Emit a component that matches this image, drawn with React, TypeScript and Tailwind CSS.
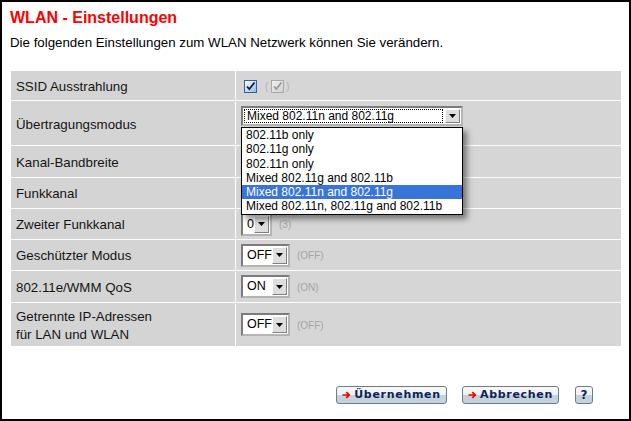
import React from "react";

const Arrow = () => (
  <svg width="9" height="8" viewBox="0 0 9 8" className="shrink-0">
    <path d="M0.5 4H7.2M4.3 1.2L7.2 4L4.3 6.8" stroke="#f00000" strokeWidth="1.7" fill="none" />
  </svg>
);

const Check = ({ gray }: { gray?: boolean }) => (
  <svg width="13" height="13" viewBox="0 0 13 13">
    <defs>
      <linearGradient id={gray ? "cbg" : "cbb"} x1="0" y1="0" x2="1" y2="1">
        <stop offset="0" stopColor={gray ? "#f2f2f2" : "#ffffff"} />
        <stop offset="1" stopColor={gray ? "#cfcfcf" : "#8fb8e8"} />
      </linearGradient>
    </defs>
    <rect x="0.5" y="0.5" width="12" height="12" fill={`url(#${gray ? "cbg" : "cbb"})`} stroke={gray ? "#a8a8a8" : "#3a5f96"} />
    <path d="M3 6.5L5.3 9L10.5 2.5" stroke={gray ? "#9a9a9a" : "#10213d"} strokeWidth="1.8" fill="none" />
  </svg>
);

const DropBtn = () => (
  <div className="w-[15px] self-stretch bg-[#dedede] border border-t-white border-l-white border-b-[#808080] border-r-[#808080] flex items-center justify-center">
    <svg width="7" height="4" viewBox="0 0 7 4">
      <path d="M0 0H7L3.5 4Z" fill="#000" />
    </svg>
  </div>
);

const Select = ({ value, width }: { value: string; width: number }) => (
  <div
    className="h-[23px] bg-white border-2 border-t-[#7c7c7c] border-l-[#7c7c7c] border-b-[#b4b4b4] border-r-[#b4b4b4] flex items-stretch p-px"
    style={{ width }}
  >
    <div className="flex-1 pl-[3px] text-[12.5px] leading-[17px] text-black">{value}</div>
    <DropBtn />
  </div>
);

const Hint = ({ children }: { children: React.ReactNode }) => (
  <span className="text-[10px] text-[#a4a4a4] ml-[7px] pt-px">{children}</span>
);

const Btn = ({ label, width }: { label: string; width: number }) => (
  <div
    className="h-[18px] rounded-[3px] border border-[#6e7c88] bg-[linear-gradient(#f7f8f9_0%,#eef0f2_50%,#c4d2dc_51%,#c4d2dc_100%)] flex items-center justify-center gap-[3px] text-[11px] font-bold tracking-[0.7px] text-[#0d2358]"
    style={{ width, fontFamily: '"DejaVu Sans", Verdana, sans-serif' }}
  >
    <Arrow />
    <span className="leading-[14px]">{label}</span>
  </div>
);

const options = [
  "802.11b only",
  "802.11g only",
  "802.11n only",
  "Mixed 802.11g and 802.11b",
  "Mixed 802.11n and 802.11g",
  "Mixed 802.11n, 802.11g and 802.11b",
];

const Row = ({ h, label, children }: { h: number; label: React.ReactNode; children?: React.ReactNode }) => (
  <div className="flex gap-px" style={{ height: h }}>
    <div className="w-[224px] bg-[#d4d4d4] pl-[5px] pt-[2px] flex items-center text-[13.3px] leading-[18px] text-[#141414]">{label}</div>
    <div className="flex-1 bg-[#d6d6d6] pl-[5px] flex items-center relative">{children}</div>
  </div>
);

export default function App() {
  return (
    <div
      className="relative w-[631px] h-[421px] border-2 border-black bg-white overflow-hidden flex flex-col"
      style={{ fontFamily: '"Liberation Sans", Arial, sans-serif' }}
    >
      <h1 className="ml-[8px] mt-[7px] text-[16px] leading-[18px] font-bold text-[#ff0000]">WLAN - Einstellungen</h1>
      <p className="ml-[8px] mt-[8px] text-[13.3px] leading-[16px] text-black">
        Die folgenden Einstellungen zum WLAN Netzwerk können Sie verändern.
      </p>

      <div className="ml-[9px] mt-[20px] w-[610px] flex flex-col gap-px bg-white">
        <Row h={29} label="SSID Ausstrahlung">
          <div className="flex items-center pl-[3px] pt-px">
            <Check />
            <span className="text-[10px] text-[#b0b0b0] ml-[8px]">(</span>
            <span className="ml-[3px] flex"><Check gray /></span>
            <span className="text-[10px] text-[#b0b0b0] ml-[2px]">)</span>
          </div>
        </Row>
        <Row h={44} label={<span className="pt-[2px]">Übertragungsmodus</span>}>
          <div className="absolute left-[5px] top-[5px] w-[222px] z-10">
            <div className="h-[20px] bg-white border-2 border-t-[#7c7c7c] border-l-[#7c7c7c] border-b-[#b4b4b4] border-r-[#b4b4b4] flex items-stretch p-px">
              <div className="flex-1 mr-[2px] border border-dotted border-black pl-[2px] text-[12px] leading-[12px] text-black flex items-center">
                Mixed 802.11n and 802.11g
              </div>
              <DropBtn />
            </div>
            <div className="mt-px border border-black bg-white shadow-[4px_4px_6px_rgba(0,0,0,0.45)]">
              {options.map((o, i) => (
                <div
                  key={o}
                  className={
                    "h-[14.3px] pl-[4px] text-[12px] leading-[14.3px] " +
                    (i === 4 ? "bg-[#3875d6] text-white" : "text-black")
                  }
                >
                  {o}
                </div>
              ))}
            </div>
          </div>
        </Row>
        <Row h={31} label="Kanal-Bandbreite" />
        <Row h={30} label="Funkkanal" />
        <Row h={30} label="Zweiter Funkkanal">
          <Select value="0" width={31} />
          <Hint>(3)</Hint>
        </Row>
        <Row h={30} label="Geschützter Modus">
          <Select value="OFF" width={49} />
          <Hint>(OFF)</Hint>
        </Row>
        <Row h={31} label="802.11e/WMM QoS">
          <Select value="ON" width={49} />
          <Hint>(ON)</Hint>
        </Row>
        <Row
          h={43}
          label={
            <span>
              Getrennte IP-Adressen
              <br />
              für LAN und WLAN
            </span>
          }
        >
          <Select value="OFF" width={49} />
          <Hint>(OFF)</Hint>
        </Row>
      </div>

      <div className="mt-[40px] mr-[36px] flex justify-end items-center">
        <Btn label="Übernehmen" width={111} />
        <div className="w-[15px]" />
        <Btn label="Abbrechen" width={97} />
        <div className="w-[16px]" />
        <div
          className="w-[18px] h-[18px] rounded-[3px] border border-[#6e7c88] bg-[linear-gradient(#f7f8f9_0%,#eef0f2_50%,#c4d2dc_51%,#c4d2dc_100%)] flex items-center justify-center text-[12px] font-bold text-[#0d2358]"
          style={{ fontFamily: '"DejaVu Sans", Verdana, sans-serif' }}
        >
          ?
        </div>
      </div>
    </div>
  );
}
